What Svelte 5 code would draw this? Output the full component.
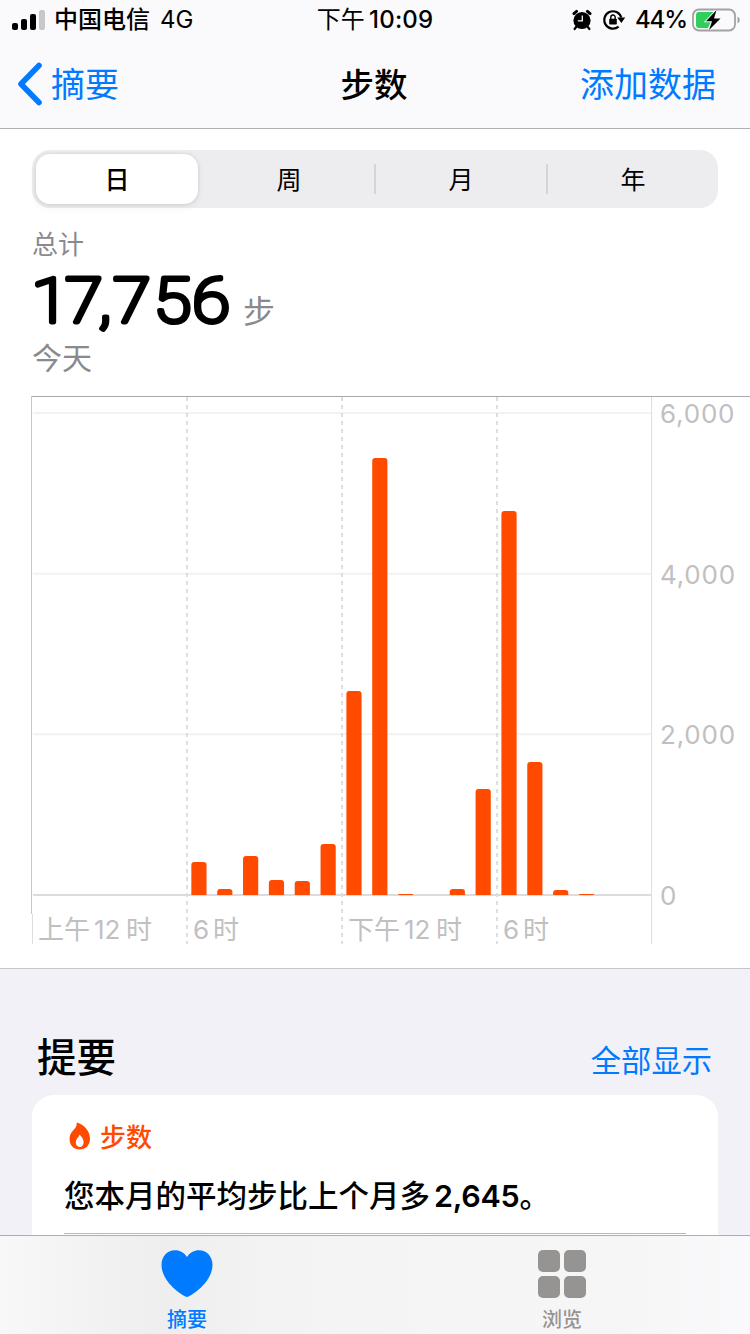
<svelte:options runes={true} />

<script lang="ts">
  const ranges = ['日', '周', '月', '年'];
  let active = $state(0);

  // steps per hour, midnight first
  const steps = [0, 0, 0, 0, 0, 0, 411, 75, 485, 187, 174, 635, 2540, 5440, 15, 0, 75, 1320, 4780, 1656, 62, 15, 0, 0];

  const base = 499;
  const scale = 482 / 6000;
  const yTicks = [6000, 4000, 2000, 0];
  const tickY = (v: number) => base - v * scale;

  const bars = steps
    .map((v, i) => ({ x: 32 + i * 25.84 + 4.3, h: Math.round(v * scale) }))
    .filter((b) => b.h > 0);

  const barPath = (x: number, h: number) => {
    const r = Math.min(3, h);
    return `M${x} ${base}v${r - h}q0 ${-r} ${r} ${-r}h${15.2 - 2 * r}q${r} 0 ${r} ${r}v${h - r}z`;
  };
</script>

<div class="screen">
  <header>
    <div class="status">
      <div class="carrier">
        <svg width="34" height="20" viewBox="0 0 34 20">
          <rect x="0" y="13" width="6" height="7" rx="2" />
          <rect x="9" y="9" width="6" height="11" rx="2" />
          <rect x="18" y="4" width="6" height="16" rx="2" />
          <rect x="27" y="0" width="6" height="20" rx="2" fill="#c8c8ca" />
        </svg>
        <span class="operator">中国电信</span>
        <span class="latin">4G</span>
      </div>
      <div class="time"><span class="cjk">下午</span><span>10:09</span></div>
      <div class="indicators">
        <svg class="alarm" width="20" height="22" viewBox="0 0 20 22">
          <circle cx="10" cy="11.5" r="8.6" />
          <path d="M1.9 4.6 4.6 2.4M18.1 4.6 15.4 2.4" stroke="#000" stroke-width="3" stroke-linecap="round" />
          <path d="M4.5 17.5 2.6 20M15.5 17.5 17.4 20" stroke="#000" stroke-width="2.2" stroke-linecap="round" />
          <path d="M10.3 6.5v5.4H5.8" fill="none" stroke="#fafafc" stroke-width="1.3" />
        </svg>
        <svg class="lock" width="22" height="22" viewBox="0 0 22 22">
          <path d="M15.6 17.6A8.7 8.7 0 1 1 18.3 8.5" fill="none" stroke="#000" stroke-width="2.2" />
          <path d="M14.2 8.5h8l-3.8 5.6z" />
          <rect x="6.2" y="9.8" width="7.6" height="5.8" rx="0.8" />
          <path d="M7.8 10V8.2a2.2 2.2 0 0 1 4.4 0V10" fill="none" stroke="#000" stroke-width="1.4" />
        </svg>
        <span class="percent">44%</span>
        <svg class="battery" width="48" height="24" viewBox="0 0 48 24">
          <rect x="1" y="1.5" width="42" height="21" rx="6" fill="none" stroke="#a2a2a5" stroke-width="1.8" />
          <path d="M45.5 8.5q2.3 1 2.3 3.5t-2.3 3.5z" fill="#a2a2a5" />
          <path d="M7 4h17L16 20H7q-3 0-3-3V7q0-3 3-3z" fill="#30cf5b" />
          <path d="M24.5 2.5 14.5 13h5.8L17.3 21.5 28 10.8h-6.3z" stroke="#fafafc" stroke-width="2.4" />
          <path d="M24.5 2 14 13.2h6L17 22 28.5 10.5H22z" />
        </svg>
      </div>
    </div>
    <nav>
      <a class="back" href="#summary">
        <svg width="25" height="44" viewBox="0 0 25 44">
          <path d="M22 3.5 4 22l18 18.500" fill="none" stroke="#007aff" stroke-width="5.6" stroke-linecap="round" stroke-linejoin="round" />
        </svg>
        <span>摘要</span>
      </a>
      <h1>步数</h1>
      <a class="add" href="#add">添加数据</a>
    </nav>
  </header>

  <main>
    <section class="detail">
      <div class="segments">
        {#each ranges as r, i}
          <button class:active={i === active} onclick={() => (active = i)}>{r}</button>
        {/each}
      </div>

      <p class="label">总计</p>
      <div class="total">
        <svg width="205" height="68" viewBox="0 0 205 68">
          <!-- the wide round stroke gives the digits their rounded ends -->
          <text transform="scale(1.1 1)" y="49.5" x="-0.5 30.3 60.6 73.8 110.6 146">17,756</text>
        </svg>
        <span class="unit">步</span>
      </div>
      <p class="day">今天</p>

      <svg class="chart" width="750" height="548" viewBox="0 0 750 548">
        <path d="M32 .5H750" stroke="#a9a9ab" />
        <path d="M31.5 0V518" stroke="#c6c6c8" />
        <path d="M32.5 518V548M651.5 1V548" stroke="#dededf" />
        {#each yTicks as t}
          <path d="M33 {tickY(t)}H651" stroke={t === 0 ? '#dcdcde' : '#f2f2f3'} stroke-width="2" />
          <text class="tick" x="660" y={tickY(t) + 10}>{t.toLocaleString('en-US')}</text>
        {/each}
        {#each [187, 342, 497] as x}
          <path d="M{x} 1V548" stroke="#dedee0" stroke-width="2" stroke-dasharray="4 4" />
        {/each}
        {#each bars as b}
          <path d={barPath(b.x, b.h)} fill="#ff4a00" />
        {/each}
        <text y="543"><tspan x="38">上午</tspan><tspan x="94">12</tspan><tspan x="126">时</tspan></text>
        <text y="543"><tspan x="193">6</tspan><tspan x="213">时</tspan></text>
        <text y="543"><tspan x="348">下午</tspan><tspan x="404">12</tspan><tspan x="436">时</tspan></text>
        <text y="543"><tspan x="503">6</tspan><tspan x="523">时</tspan></text>
      </svg>
    </section>

    <section class="highlights">
      <div class="heading">
        <h2>提要</h2>
        <a href="#all">全部显示</a>
      </div>
      <article class="card">
        <div class="kind">
          <svg width="22" height="28" viewBox="0 0 22 28">
            <path d="M7.6.4C14 1.8 21 8 21 16.8 21 23.4 16.4 27.6 10.7 27.6S.6 23.4.6 17.3C.6 11.5 3.5 9.4 5.8 6.5 7.3 4.6 8 2.6 7.6.4z" fill="#ff4a00" />
            <path d="M10.7 12.6c2.200 2.600 3.900 4.700 3.900 7.600 0 2.900-1.700 4.800-3.900 4.800s-3.900-1.900-3.900-4.700c0-3.100 2.900-4.700 3.900-7.700z" fill="#fff" />
          </svg>
          步数
        </div>
        <p class="message"><span>您本月的平均步比上个月多</span><span class="amount">2,645</span><span>。</span></p>
        <hr />
      </article>
    </section>
  </main>

  <footer>
    <a class="tab selected" href="#summary">
      <svg width="52" height="50" viewBox="0 0 52 50">
        <path d="M26 48C23.5 48 .5 34 .5 16 .5 7 6.5 1.2 14 1.2c5 0 9.2 2.3 12 6.8 2.8-4.5 7-6.8 12-6.8 7.5 0 13.5 5.8 13.5 14.8C51.5 34 28.5 48 26 48z" fill="#007aff" />
      </svg>
      <span>摘要</span>
    </a>
    <a class="tab" href="#browse">
      <svg width="48" height="50" viewBox="0 0 48 50" fill="#959492">
        <rect x="0" y="1" width="22" height="22" rx="5" />
        <rect x="26" y="1" width="22" height="22" rx="5" />
        <rect x="0" y="27" width="22" height="22" rx="5" />
        <rect x="26" y="27" width="22" height="22" rx="5" />
      </svg>
      <span>浏览</span>
    </a>
  </footer>
</div>

<style>
  :global(body) { margin: 0; background: #fff; }
  .screen  { width: 750px; height: 1334px; display: flex; flex-direction: column; overflow: hidden;
             font-family: Inter, "Noto Sans CJK SC", sans-serif; color: #000; }
  .screen svg { display: block; flex: none; overflow: visible; }
  a        { color: #007aff; text-decoration: none; }
  p, h1, h2 { margin: 0; }

  header   { height: 128px; flex: none; background: #fafafc; border-bottom: 1px solid #b0b0b3; }
  .status  { height: 40px; display: grid; grid-template-columns: 1fr auto 1fr; align-items: center;
             font-size: 24px; font-weight: 500; line-height: 40px; }
  .carrier { display: flex; align-items: center; padding-left: 12px; }
  .operator { margin: 0 10px 0 8px; }
  .latin   { font-weight: 400; }
  .time    { display: flex; gap: 4px; letter-spacing: .2px; }
  .cjk     { font-weight: 400; }
  .indicators { display: flex; align-items: center; justify-content: flex-end; padding-right: 10px; }
  .lock    { margin: 0 10px 0 11px; }
  .percent { letter-spacing: -1.1px; }
  .battery { margin-left: 5px; }

  nav      { height: 86px; padding-top: 2px; display: grid; grid-template-columns: 1fr auto 1fr; align-items: center;
             font-size: 34px; line-height: 86px; }
  .back    { display: flex; align-items: center; gap: 9px; padding-left: 17px; }
  .back svg { margin-top: -2px; }
  h1       { font-size: 33.5px; font-weight: 500; margin-left: -2px; }
  .add     { text-align: right; padding-right: 34px; }

  main     { flex: 1; min-height: 0; overflow: hidden; background: #f2f1f7; }
  .detail  { height: 840px; box-sizing: border-box; padding-top: 21px; background: #fff;
             border-bottom: 1px solid #c6c6ca; display: flex; flex-direction: column; }
  .segments { height: 58px; margin: 0 32px; padding: 4px; box-sizing: border-box; display: flex; gap: 10px;
             background: #ededf0; border-radius: 18px; }
  .segments button { flex: 1; position: relative; border: 0; padding: 0; background: none; border-radius: 14px;
             font: 400 25px/48px "Noto Sans CJK SC", sans-serif; color: #000; padding-bottom: 2px; }
  .segments .active { font-weight: 500; background: #fff; box-shadow: 0 0 3px 1px rgba(0, 0, 0, .08), 0 3px 8px rgba(0, 0, 0, .06); }
  .segments button:nth-child(n + 3)::before { content: ""; position: absolute; left: -6px; top: 10px;
             width: 2px; height: 30px; background: #d5d5d9; }

  .label   { margin: 17px 32px 0; font-size: 26px; line-height: 40px; color: #8a8a8e; }
  .total   { height: 68px; margin: 7px 32px 0; display: flex; }
  .total text { font-family: Roboto, sans-serif; font-size: 62px; font-weight: 100; stroke: #000; stroke-width: 5; stroke-linejoin: round; }
  .unit    { margin: 19px 0 0 6px; font-size: 32px; line-height: 42px; color: #8a8a8e; }
  .day     { margin: -2px 32px 0; font-size: 30px; line-height: 40px; color: #8a8a8e; }
  .chart   { margin-top: 18px; font-size: 26px; }
  .chart text { fill: #c0c0c2; }
  .chart .tick { letter-spacing: .8px; }

  .heading { display: flex; justify-content: space-between; align-items: center; padding: 55px 38px 11px 37px; height: 60px; }
  h2       { font-size: 39.5px; font-weight: 500; }
  .heading a { font-size: 30.3px; padding-top: 10px; }
  .card    { height: 220px; margin: 0 32px; padding: 18px 32px 0; box-sizing: border-box; background: #fff; border-radius: 22px; }
  .kind    { display: flex; align-items: center; gap: 9px; padding-left: 5px; height: 44px;
             font-size: 26px; font-weight: 500; color: #ff4a00; }
  .kind svg { margin-top: 2px; }
  .message { margin-top: 16px; height: 46px; line-height: 46px; display: flex; font-size: 30.5px; font-weight: 500; }
  .amount  { margin-left: 4px; font-weight: 600; letter-spacing: -.3px; }
  hr       { margin: 14px 0 0; border: 0; border-top: 1px solid #b8b8bb; }

  footer   { height: 98px; flex: none; display: flex; border-top: 1px solid #aeaeb2;
             background: linear-gradient(90deg, #f8f8f9, #eeeeee 22%, #f3f3f3 36%, #f6f5f5 60%, #f7f6f7 85%, #f9f9fb); }
  .tab     { flex: 1; display: flex; flex-direction: column; align-items: center; padding: 13px 2px 0 0;
             font-size: 20px; line-height: 42px; font-weight: 500; color: #959492; }
  .tab span { padding-left: 1px; }
  .selected { color: #007aff; }
</style>
